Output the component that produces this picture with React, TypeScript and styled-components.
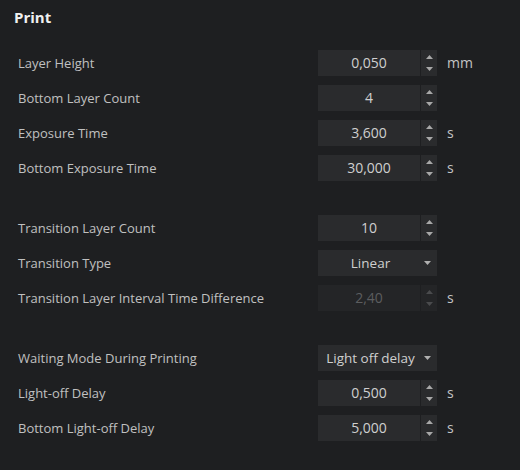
import {FC} from 'react'
import styled, {createGlobalStyle} from 'styled-components'

const GlobalStyle = createGlobalStyle`
    html, body {
        margin: 0;
        padding: 0;
        background: #1e1f21;
    }
    body {
        font-family: "Open Sans", "Noto Sans", sans-serif;
        color: #c4c4c4;
    }
`

type Field =
    | {kind: 'number'; label: string; value: string; unit?: string; disabled?: boolean}
    | {kind: 'select'; label: string; value: string}

const groups: Field[][] = [
    [
        {kind: 'number', label: 'Layer Height', value: '0,050', unit: 'mm'},
        {kind: 'number', label: 'Bottom Layer Count', value: '4'},
        {kind: 'number', label: 'Exposure Time', value: '3,600', unit: 's'},
        {kind: 'number', label: 'Bottom Exposure Time', value: '30,000', unit: 's'},
    ],
    [
        {kind: 'number', label: 'Transition Layer Count', value: '10'},
        {kind: 'select', label: 'Transition Type', value: 'Linear'},
        {kind: 'number', label: 'Transition Layer Interval Time Difference', value: '2,40', unit: 's', disabled: true},
    ],
    [
        {kind: 'select', label: 'Waiting Mode During Printing', value: 'Light off delay'},
        {kind: 'number', label: 'Light-off Delay', value: '0,500', unit: 's'},
        {kind: 'number', label: 'Bottom Light-off Delay', value: '5,000', unit: 's'},
    ],
]

const Arrow: FC<{up?: boolean}> = ({up}) => (
    <svg width="7" height="4" viewBox="0 0 7 4">
        <path d={up ? 'M0 4 L3.5 0 L7 4 Z' : 'M0 0 L3.5 4 L7 0 Z'} fill="currentColor"/>
    </svg>
)

const NumberField: FC<{value: string; disabled?: boolean}> = ({value, disabled}) => (
    <SpinBox $disabled={disabled}>
        <SpinValue>{value}</SpinValue>
        <SpinButtons $disabled={disabled}>
            <Arrow up/>
            <Arrow/>
        </SpinButtons>
    </SpinBox>
)

const SelectField: FC<{value: string}> = ({value}) => (
    <SelectBox>
        <SelectValue>{value}</SelectValue>
        <SelectCaret>
            <Arrow/>
        </SelectCaret>
    </SelectBox>
)

const App: FC = () => {
    return (
        <Panel>
            <GlobalStyle/>
            <Title>Print</Title>
            {groups.map((group, gi) => (
                <Group key={gi}>
                    {group.map((f) => (
                        <Row key={f.label}>
                            <Label>{f.label}</Label>
                            {f.kind === 'number'
                                ? <NumberField value={f.value} disabled={f.disabled}/>
                                : <SelectField value={f.value}/>}
                            <Unit>{f.kind === 'number' ? f.unit : ''}</Unit>
                        </Row>
                    ))}
                </Group>
            ))}
        </Panel>
    )
}

const Panel = styled.div`
    width: 520px;
    height: 470px;
    box-sizing: border-box;
    padding: 1px 0 0 14px;
    display: flex;
    flex-direction: column;
`

const Title = styled.div`
    height: 32px;
    line-height: 32px;
    font-size: 15px;
    font-weight: 700;
    color: #f0f0f0;
`

const Group = styled.div`
    display: flex;
    flex-direction: column;
    margin-top: 12px;

    & + & {
        margin-top: 25px;
    }
`

const Row = styled.div`
    height: 35px;
    display: grid;
    grid-template-columns: 304px 119px auto;
    align-items: center;
`

const Label = styled.div`
    padding-left: 4px;
    font-size: 13px;
    color: #c0c0c0;
    white-space: nowrap;
`

const SpinBox = styled.div<{$disabled?: boolean}>`
    height: 26px;
    display: flex;
    background: ${(p) => (p.$disabled ? '#242527' : '#2a2b2d')};
    color: ${(p) => (p.$disabled ? '#5c5d5f' : '#cfcfcf')};
`

const SpinValue = styled.div`
    flex: 1;
    display: flex;
    align-items: center;
    justify-content: center;
    font-size: 14px;
    border-right: 1px solid #1e1f21;
`

const SpinButtons = styled.div<{$disabled?: boolean}>`
    width: 16px;
    display: flex;
    flex-direction: column;
    align-items: center;
    justify-content: center;
    gap: 8px;
    color: ${(p) => (p.$disabled ? '#4a4b4d' : '#a8a8a8')};
`

const SelectBox = styled.div`
    height: 26px;
    display: flex;
    align-items: center;
    background: #2a2b2d;
    color: #cfcfcf;
`

const SelectValue = styled.div`
    flex: 1;
    text-align: center;
    font-size: 13.5px;
    padding-left: 6px;
`

const SelectCaret = styled.div`
    width: 20px;
    display: flex;
    justify-content: center;
    color: #b0b0b0;
`

const Unit = styled.div`
    padding-left: 10px;
    font-size: 14px;
    color: #c4c4c4;
`

export default App
